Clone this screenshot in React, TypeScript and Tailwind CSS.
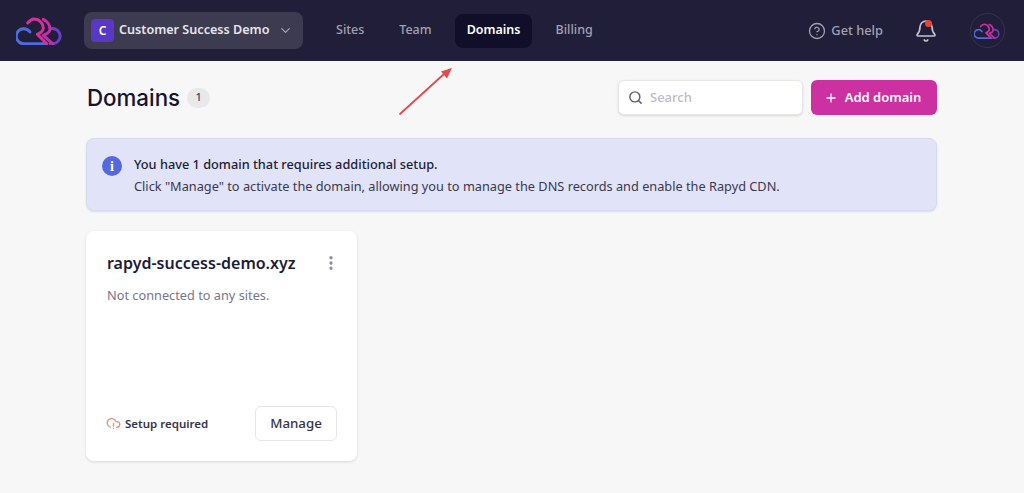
import { ChevronDown, CircleHelp, Bell, Search, Plus, CloudAlert, EllipsisVertical } from "lucide-react";

function Logo({ className }: { className: string }) {
  return (
    <svg viewBox="0 0 48 28" fill="none" strokeWidth="3" strokeLinecap="round" strokeLinejoin="round" className={className}>
      <path d="M14 15A7.500 7.500 0 1 0 7.500 26.700H29" stroke="#4f6be0" />
      <path d="M36 11.500A7.600 7.600 0 0 1 37 26.700H34" stroke="#6a3fc8" />
      <path d="M11.700 6C14 3 16 2 18.300 2 23 2 27.300 6.500 27.300 11 27.300 14 24.500 16 21.300 17.300L30.700 26.700" stroke="#d6309f" />
      <path d="M27.300 2.300C31 4 34 8 34 12 34 15 31 17 27.300 18.300L36.500 26.700" stroke="#c42fa5" />
    </svg>
  );
}

function NavLink({ label, active }: { label: string; active?: boolean }) {
  return (
    <a className={active ? "flex h-[34px] items-center rounded-lg bg-[#100e28] px-3 text-[12.500px] font-semibold text-white" : "flex h-[34px] items-center rounded-lg px-3 text-[12.500px] font-medium text-[#a3a1b1]"}>
      {label}
    </a>
  );
}

export default function App() {
  return (
    <div className="relative min-h-[493px] bg-[#f7f7f7] font-['Noto_Sans',sans-serif] text-[#1d1b36]">
      <header className="flex h-[61px] items-center bg-[#201e38] pr-[19px] pl-[16px]">
        <Logo className="h-[28px] w-[48px]" />
        <button className="ml-[20px] flex h-[37px] w-[219px] items-center rounded-lg bg-[#3d3b50] pr-[10px] pl-[7px]">
          <span className="flex h-[23px] w-[23px] items-center justify-center rounded bg-[#5a37c4] text-[12px] font-semibold text-white">C</span>
          <span className="ml-[5px] text-[12.600px] font-semibold whitespace-nowrap text-[#e6e5ea]">Customer Success Demo</span>
          <ChevronDown className="ml-auto h-[15px] w-[15px] text-[#a3a1b1]" />
        </button>
        <nav className="ml-[21px] flex items-center gap-[11px]">
          <NavLink label="Sites" />
          <NavLink label="Team" />
          <NavLink label="Domains" active />
          <NavLink label="Billing" />
        </nav>
        <a className="ml-auto flex items-center gap-[5px] text-[12.800px] font-medium text-[#a3a1b1]">
          <CircleHelp className="h-[18px] w-[18px]" strokeWidth={1.700} />
          Get help
        </a>
        <div className="relative ml-[31px] h-[24px] w-[24px] text-[#c5c4ce]">
          <Bell className="h-[24px] w-[24px]" strokeWidth={1.700} />
          <span className="absolute top-[1px] left-[11px] h-[7px] w-[7px] rounded-full bg-[#ea4335]" />
        </div>
        <div className="ml-[32px] flex h-[35px] w-[35px] items-center justify-center rounded-full border border-[#36344c]">
          <Logo className="h-[16px] w-[27px]" />
        </div>
      </header>

      <main className="ml-[86px] w-[851px] pt-[19px]">
        <div className="flex items-center">
          <h1 className="pt-px pl-px font-['Inter',sans-serif] text-[22.300px] leading-[34px] font-medium text-[#15132e]">Domains</h1>
          <span className="ml-[7px] flex h-[20px] w-[23px] items-center justify-center rounded-full bg-[#e9e9ec] text-[11px] font-medium text-[#45435a]">1</span>
          <div className="ml-auto flex h-[35px] w-[185px] items-center rounded-md border border-[#e6e6ea] bg-white pl-[9px] shadow-sm">
            <Search className="h-[15px] w-[15px] text-[#5f5d72]" strokeWidth={2.300} />
            <span className="ml-[7px] pt-px text-[13px] font-medium text-[#bcbacd]">Search</span>
          </div>
          <button className="ml-[8px] flex h-[35px] w-[126px] items-center justify-center gap-[7px] rounded-md bg-[#cd30a0] pt-px pr-[3px] text-[13px] font-semibold text-white">
            <Plus className="h-[14px] w-[14px]" strokeWidth={2.200} />
            Add domain
          </button>
        </div>

        <div className="mt-[23px] flex h-[73px] items-start rounded-lg border border-[#d8daf0] bg-[#e1e4f8] pt-[14px] pl-[15px] shadow-[0_1px_2px_rgba(60,60,120,0.15)]">
          <span className="mt-[3px] flex h-[20px] w-[20px] items-center justify-center rounded-full bg-[#5568e0] font-['Liberation_Serif',serif] text-[14px] font-bold text-white">i</span>
          <div className="ml-[12px] text-[12.750px] leading-[22px] text-[#3a384e]">
            <p className="font-medium text-[#1d1b36]">You have 1 domain that requires additional setup.</p>
            <p>Click "Manage" to activate the domain, allowing you to manage the DNS records and enable the Rapyd CDN.</p>
          </div>
        </div>

        <article className="mt-[20px] flex h-[230px] w-[271px] flex-col rounded-lg bg-white pt-[20px] pr-[20px] pb-[20px] pl-[21px] shadow-[0_1px_3px_rgba(0,0,0,0.12)]">
          <div className="flex items-center justify-between">
            <h2 className="text-[16px] leading-[24px] font-semibold text-[#1d1b36]">rapyd-success-demo.xyz</h2>
            <EllipsisVertical className="-mr-[3px] h-[18px] w-[18px] text-[#8d8b9d]" strokeWidth={2.400} />
          </div>
          <p className="mt-[11px] text-[12.750px] leading-[18px] text-[#77758a]">Not connected to any sites.</p>
          <div className="mt-auto flex items-center justify-between">
            <div className="-ml-px flex items-center gap-[4px]">
              <CloudAlert className="h-[15px] w-[15px] text-[#dd9a85]" strokeWidth={2.300} />
              <span className="text-[11.500px] font-semibold text-[#35334b]">Setup required</span>
            </div>
            <button className="flex h-[35px] w-[82px] items-center justify-center rounded-md border border-[#e6e6ea] bg-white text-[13.300px] font-medium text-[#35334b]">Manage</button>
          </div>
        </article>
      </main>

      <svg viewBox="0 0 60 52" fill="none" className="absolute top-[65px] left-[397px] h-[52px] w-[60px]">
        <path d="M3 49 47 9" stroke="#e5484d" strokeWidth="1.800" strokeLinecap="round" />
        <path d="M55 3 44 6.500 50 13.500Z" fill="#e5484d" />
      </svg>
    </div>
  );
}
